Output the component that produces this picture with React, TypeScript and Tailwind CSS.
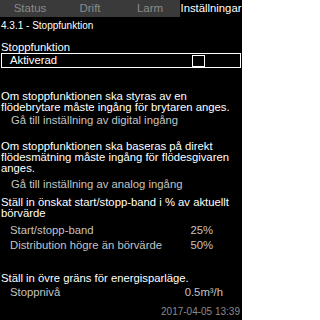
import React from 'react';

const tabs = ['Status', 'Drift', 'Larm'];

const App = () => {
  return (
    <div className="w-[242px] h-[320px] bg-black overflow-hidden text-white text-[11.3px] leading-[11px] font-['Liberation_Sans',Arial,sans-serif]">
      {/* flikar */}
      <div className="flex h-[17px]">
        <div className="flex w-[180px] bg-[#3a3a3a]">
          {tabs.map((t) => (
            <div key={t} className="flex-1 flex items-center justify-center text-[#8a8a8a] text-[11.5px]">
              {t}
            </div>
          ))}
        </div>
        <div className="flex-1 flex items-center justify-center text-white text-[11.3px]">Inställningar</div>
      </div>

      <div className="mt-[3px] pl-[1px] text-[10px] h-[11px]">4.3.1 - Stoppfunktion</div>

      <div className="mt-[11px] pl-[1px] h-[11px]">Stoppfunktion</div>
      <div className="mx-[1px] h-[15px] border border-white flex items-center justify-between pl-[8px] pr-[35px]">
        <span>Aktiverad</span>
        <span className="w-[13px] h-[12px] border border-white" />
      </div>

      <div className="mt-[23px] pl-[1px] whitespace-nowrap">
        <div>Om stoppfunktionen ska styras av en</div>
        <div>flödebrytare måste ingång för brytaren anges.</div>
      </div>
      <div className="mt-[2px] pl-[11px] text-[#c4c4c4]">Gå till inställning av digital ingång</div>

      <div className="mt-[15px] pl-[1px] whitespace-nowrap">
        <div>Om stoppfunktionen ska baseras på direkt</div>
        <div>flödesmätning måste ingång för flödesgivaren</div>
        <div>anges.</div>
      </div>
      <div className="mt-[5px] pl-[11px] text-[#c4c4c4]">Gå till inställning av analog ingång</div>

      <div className="mt-[7px] pl-[1px] whitespace-nowrap">
        <div>Ställ in önskat start/stopp-band i % av aktuellt</div>
        <div>börvärde</div>
      </div>
      <div className="mt-[6px] pl-[10px] pr-[29px] flex justify-between text-[#c4c4c4]">
        <span>Start/stopp-band</span>
        <span>25%</span>
      </div>
      <div className="mt-[4px] pl-[10px] pr-[29px] flex justify-between text-[#c4c4c4]">
        <span>Distribution högre än börvärde</span>
        <span>50%</span>
      </div>

      <div className="mt-[22px] pl-[1px] whitespace-nowrap">Ställ in övre gräns för energisparläge.</div>
      <div className="mt-[3px] pl-[10px] pr-[19px] flex justify-between text-[#c4c4c4]">
        <span>Stoppnivå</span>
        <span>0.5m³/h</span>
      </div>

      <div className="mt-[8px] pr-[2px] text-right text-[10px] text-[#8a8a8a]">2017-04-05 13:39</div>
    </div>
  );
};

export default App;
